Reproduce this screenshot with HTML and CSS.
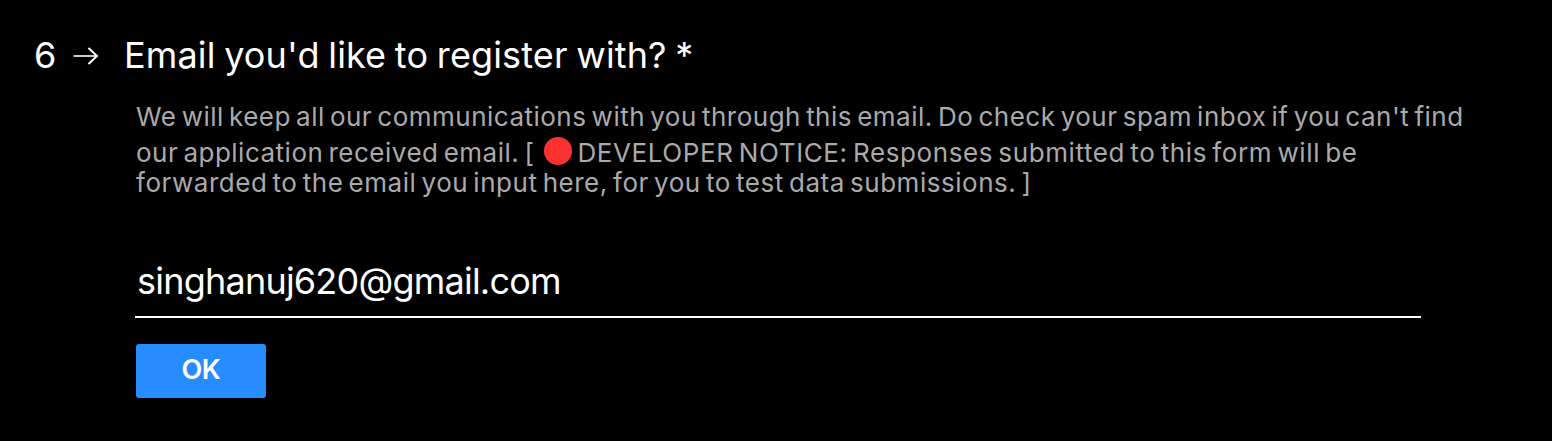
FILE: index.html
```html
<!DOCTYPE html>
<html lang="en">
<head>
<meta charset="utf-8">
<title>Registration</title>
<link rel="stylesheet" href="styles.css">
</head>
<body>
<main class="question">
  <header class="heading">
    <span class="number">6</span>
    <svg class="arrow" viewBox="0 0 26 20" width="26" height="20"><path class="shaft" d="M0.5 11H23"/><path d="M15.5 3L24 11L15.5 19"/></svg>
    <h1 class="title">Email you'd like to register with? *</h1>
  </header>
  <p class="description">
    <span class="line line-1">We will keep all our communications with you through this email. Do check your spam inbox if you can't find</span>
    <span class="line line-2"><span class="before">our application received email. [</span><svg class="dot" viewBox="0 0 28 28" width="28" height="28"><circle cx="14" cy="14" r="14"/></svg><span class="notice">DEVELOPER NOTICE: Responses submitted to this form will be</span></span>
    <span class="line line-3">forwarded to the email you input here, for you to test data submissions. ]</span>
  </p>
  <div class="field">singhanuj620@gmail.com</div>
  <button class="ok" type="button">OK</button>
</main>
</body>
</html>
```
FILE: styles.css
```css
* { box-sizing: border-box; }
body { margin: 0; background: #000; color: #fff; font-family: Inter, sans-serif; }
.question { height: 441px; padding: 30px 0 0 135px; overflow: hidden; }
.heading { display: flex; align-items: center; height: 50px; margin-left: -101px; font-size: 36px; }
.number { width: 39px; }
.arrow { fill: none; stroke: #fff; stroke-width: 2; }
.shaft { stroke: #ccc; }
.title { margin: 0 0 0 25px; font-size: 36px; font-weight: 400; letter-spacing: 0.14px; word-spacing: -1.6px; white-space: nowrap; }
.description { margin: 21px 0 0 1px; font-size: 26px; letter-spacing: 0.49px; word-spacing: -2.6px; color: #aaa; white-space: nowrap; }
.line { display: flex; align-items: center; height: 30px; }
.line-2 { height: 36px; padding-top: 6px; }
.dot { margin: -2px 5px 0 10px; fill: #fb3230; }
.notice { letter-spacing: 0.6px; }
.line-3 { letter-spacing: 0.52px; }
.field { width: 1286px; height: 69px; margin-top: 52px; padding: 10px 2px 0; border-bottom: 2px solid #fff; font-size: 36px; line-height: 44px; letter-spacing: -0.78px; }
.ok { width: 130px; height: 54px; margin: 26px 0 0 1px; padding: 0 0 4px; border: 0; border-radius: 3px; background: #268cff; color: #fff; font: 600 27px Inter, sans-serif; letter-spacing: -0.3px; }
```
